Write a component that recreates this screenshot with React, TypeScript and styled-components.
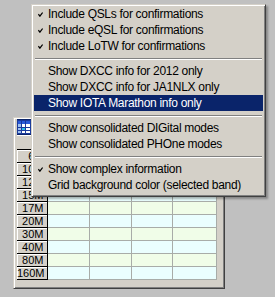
import React from "react";
import styled, { createGlobalStyle } from "styled-components";

type MenuEntry =
  | { kind: "item"; label: string; checked?: boolean; active?: boolean }
  | { kind: "sep" };

const MENU: MenuEntry[] = [
  { kind: "item", label: "Include QSLs for confirmations", checked: true },
  { kind: "item", label: "Include eQSL for confirmations", checked: true },
  { kind: "item", label: "Include LoTW for confirmations", checked: true },
  { kind: "sep" },
  { kind: "item", label: "Show DXCC info for 2012 only" },
  { kind: "item", label: "Show DXCC info for JA1NLX only" },
  { kind: "item", label: "Show IOTA Marathon info only", active: true },
  { kind: "sep" },
  { kind: "item", label: "Show consolidated DIGital modes" },
  { kind: "item", label: "Show consolidated PHOne modes" },
  { kind: "sep" },
  { kind: "item", label: "Show complex information", checked: true },
  { kind: "item", label: "Grid background color (selected band)" },
];

const BANDS = ["6M", "10M", "12M", "15M", "17M", "20M", "30M", "40M", "80M", "160M"];
const DATA_COLS = [42, 42, 41, 44];

const GlobalStyle = createGlobalStyle`
  html, body {
    margin: 0;
    padding: 0;
    background: #c0c0c0;
  }
  body {
    font-family: "Liberation Sans", Arial, sans-serif;
  }
`;

const CheckMark = () => (
  <svg width="5" height="5" viewBox="0 0 5 5">
    <path d="M0.4 2.2 L1.9 4.2 L4.6 0.5" fill="none" stroke="currentColor" strokeWidth="1.2" />
  </svg>
);

const GridIcon = () => (
  <svg width="14" height="14" viewBox="0 0 14 14">
    <rect x="0.5" y="0.5" width="13" height="13" fill="#ffffff" stroke="#1c3c9c" />
    <rect x="1" y="1" width="12" height="3" fill="#2a5ad8" />
    <rect x="1" y="4" width="3" height="9" fill="#9ec0f0" />
    <path d="M4.5 1 V13 M8.5 1 V13 M1 7.5 H13 M1 10.5 H13" stroke="#1c3c9c" strokeWidth="1" />
    <rect x="5" y="8" width="3" height="2" fill="#30c0e8" />
  </svg>
);

export default function App() {
  return (
    <>
      <GlobalStyle />
      <Desktop>
        <Window>
          <TitleBar>
            <GridIcon />
          </TitleBar>
          <Grid>
            <colgroup>
              <col style={{ width: 30 }} />
              {DATA_COLS.map((w, i) => (
                <col key={i} style={{ width: w }} />
              ))}
            </colgroup>
            <tbody>
              <HeaderRow>
                <HeadCell />
                {DATA_COLS.map((_, i) => (
                  <HeadCell key={i} />
                ))}
              </HeaderRow>
              {BANDS.map((band, r) => (
                <tr key={band}>
                  <BandCell>{band}</BandCell>
                  {DATA_COLS.map((_, c) => (
                    <DataCell key={c} $tint={r % 2 === 0 ? "green" : "cyan"} />
                  ))}
                </tr>
              ))}
            </tbody>
          </Grid>
        </Window>

        <PopupMenu>
          {MENU.map((entry, i) =>
            entry.kind === "sep" ? (
              <Separator key={i} />
            ) : (
              <MenuItem key={i} $active={!!entry.active}>
                <CheckSlot>{entry.checked && <CheckMark />}</CheckSlot>
                {entry.label}
              </MenuItem>
            )
          )}
        </PopupMenu>
      </Desktop>
    </>
  );
}

const Desktop = styled.div`
  position: relative;
  width: 275px;
  height: 297px;
  padding: 117px 0 0 13px;
  box-sizing: border-box;
  overflow: hidden;
`;

const Window = styled.div`
  width: 212px;
  height: 172px;
  box-sizing: border-box;
  background: #d4d0c8;
  border-top: 1px solid #d4d0c8;
  border-left: 1px solid #d4d0c8;
  border-right: 1px solid #404040;
  border-bottom: 1px solid #404040;
  box-shadow: inset 1px 1px 0 #ffffff, inset -1px -1px 0 #808080;
  padding: 1px 7px 7px 3px;
`;

const TitleBar = styled.div`
  height: 16px;
  background: #0a246a;
  display: flex;
  align-items: center;
`;

const Grid = styled.table`
  width: 199px;
  table-layout: fixed;
  border-collapse: collapse;
  border-right: 1px solid #000;
  border-bottom: 1px solid #000;
  font-family: "Liberation Sans", Arial, sans-serif;
  font-size: 11px;
`;

const HeaderRow = styled.tr`
  height: 14px;
`;

const HeadCell = styled.td`
  padding: 0;
  background: #d4d0c8;
  border-bottom: 1px solid #000;
  box-shadow: inset 0 1px 0 #ffffff;
`;

const BandCell = styled.td`
  height: 12px;
  padding: 0 3px 0 0;
  text-align: right;
  line-height: 12px;
  color: #000;
  background: #d4d0c8;
  border-right: 1px solid #000;
  border-bottom: 1px solid #000;
  box-shadow: inset 1px 1px 0 #ffffff;
  overflow: hidden;
  white-space: nowrap;
`;

const DataCell = styled.td<{ $tint: "green" | "cyan" }>`
  height: 12px;
  padding: 0;
  background: ${(p) => (p.$tint === "green" ? "#f0fde8" : "#eafefe")};
  border-right: 1px solid #a8aca8;
  border-bottom: 1px solid #a8aca8;
`;

const PopupMenu = styled.div`
  position: absolute;
  left: 31px;
  top: 4px;
  width: 235px;
  box-sizing: border-box;
  background: #d4d0c8;
  border-top: 1px solid #d4d0c8;
  border-left: 1px solid #d4d0c8;
  border-right: 1px solid #404040;
  border-bottom: 1px solid #404040;
  box-shadow: inset 1px 1px 0 #ffffff, inset -1px -1px 0 #808080,
    2px 2px 2px rgba(0, 0, 0, 0.3);
  padding: 1px 2px 3px 2px;
  font-family: "Liberation Sans", Arial, sans-serif;
  font-size: 12px;
  letter-spacing: -0.3px;
`;

const MenuItem = styled.div<{ $active: boolean }>`
  height: 16px;
  display: flex;
  align-items: center;
  white-space: nowrap;
  color: ${(p) => (p.$active ? "#ffffff" : "#000000")};
  background: ${(p) => (p.$active ? "#0a246a" : "transparent")};
`;

const CheckSlot = styled.span`
  width: 14px;
  flex: 0 0 14px;
  display: flex;
  justify-content: flex-end;
  align-items: center;
  padding-right: 5px;
  box-sizing: border-box;
`;

const Separator = styled.div`
  height: 9px;
  display: flex;
  align-items: center;
  margin: 0 1px;

  &::before {
    content: "";
    flex: 1;
    height: 0;
    border-top: 1px solid #808080;
    border-bottom: 1px solid #ffffff;
  }
`;
